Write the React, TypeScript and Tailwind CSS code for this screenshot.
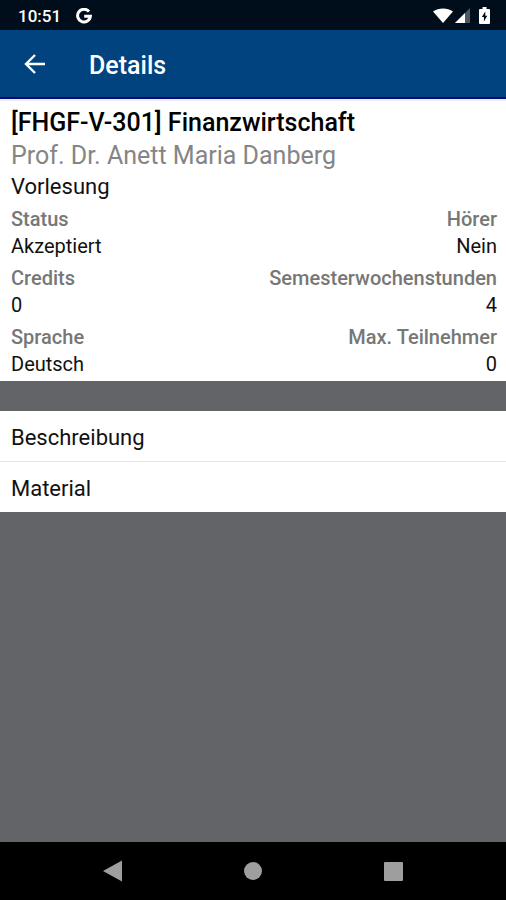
type Fact = { label: string; value: string };

const facts: [Fact, Fact][] = [
  [{ label: "Status", value: "Akzeptiert" }, { label: "Hörer", value: "Nein" }],
  [{ label: "Credits", value: "0" }, { label: "Semesterwochenstunden", value: "4" }],
  [{ label: "Sprache", value: "Deutsch" }, { label: "Max. Teilnehmer", value: "0" }],
];

const sections = ["Beschreibung", "Material"];

function StatusBar() {
  return (
    <div className="flex h-[30px] items-center justify-between bg-[#000d1a] pt-px pr-4 pl-[18px] text-white">
      <div className="flex items-center gap-[15px]">
        <span className="text-[17px] leading-7 font-medium">10:51</span>
        <svg viewBox="0 0 16 16" className="size-4" fill="none" stroke="currentColor" strokeWidth="3" aria-label="Google">
          <path d="M13 3.6A6.4 6.4 0 1 0 14.4 8.2H8.2" />
        </svg>
      </div>
      <div className="flex items-center gap-[2px]">
        <svg viewBox="0 0 20 15" className="h-[15px] w-5" fill="currentColor" aria-label="WLAN">
          <path d="M0 3.4C5.600-.6 14.400-.6 20 3.400L10 15z" />
        </svg>
        <svg viewBox="0 0 15 15" className="mr-[7px] h-[15px] w-[15px]" fill="currentColor" aria-label="Mobilfunk">
          <path d="M15 0v15H0z" fill="#4d5763" />
          <path d="M10 5v10H0z" />
        </svg>
        <svg viewBox="0 0 11 17" className="h-[17px] w-[11px]" aria-label="Akku">
          <path d="M3.500 0h4v2H10q1 0 1 1v13q0 1-1 1H1q-1 0-1-1V3q0-1 1-1h2.500z" fill="currentColor" />
          <path d="M6.300 4.500 2.800 10h2.100v4.500L8.300 8.700H6.300z" fill="#000d1a" />
        </svg>
      </div>
    </div>
  );
}

function Header() {
  return (
    <header className="flex h-[69px] items-center border-b-2 border-[#00097a] bg-[#00437f] pt-px pl-6 text-white">
      <button type="button" aria-label="Zurück" className="mr-11 flex size-[21px] items-center justify-center">
        <svg viewBox="0 0 21 20" className="h-5 w-[21px]" fill="none" stroke="currentColor" strokeWidth="2.400">
          <path d="M21 10H2.500M11 1 2 10l9 9" />
        </svg>
      </button>
      <h1 className="pt-1 text-[25px] leading-8 font-medium">Details</h1>
    </header>
  );
}

function FactCell({ label, value }: Fact) {
  return (
    <div>
      <dt className="text-[20px] leading-[27px] font-medium text-[#777]">{label}</dt>
      <dd className="text-[20px] leading-[26px]">{value}</dd>
    </div>
  );
}

function NavBar() {
  return (
    <nav className="flex h-[58px] items-center justify-center gap-[120px] bg-black text-[#9e9e9e]">
      <button type="button" aria-label="Zurück" className="flex size-5 items-center justify-center">
        <svg viewBox="0 0 20 22" className="h-[22px] w-5" fill="currentColor">
          <path d="M19 .5v21L0 11z" />
        </svg>
      </button>
      <button type="button" aria-label="Startseite" className="flex size-5 items-center justify-center">
        <span className="size-[18px] rounded-full bg-current" />
      </button>
      <button type="button" aria-label="Übersicht" className="flex size-5 items-center justify-center">
        <span className="size-[19px] rounded-[1px] bg-current" />
      </button>
    </nav>
  );
}

export default function App() {
  return (
    <div className="flex min-h-screen flex-col bg-[#636467] font-[Roboto,sans-serif] text-[#111]">
      <StatusBar />
      <Header />
      <main className="flex-1">
        <section className="border-t-2 border-[#ededf3] bg-white pt-[5px] pr-[9px] pb-1 pl-[11px]">
          <h2 className="text-[25px] leading-[33px] font-medium text-black">[FHGF-V-301] Finanzwirtschaft</h2>
          <p className="text-[25px] leading-[33px] text-[#858585]">Prof. Dr. Anett Maria Danberg</p>
          <p className="text-[22px] leading-[30px]">Vorlesung</p>
          <dl className="flex flex-col gap-[6px] pt-1">
            {facts.map(([left, right]) => (
              <div key={left.label} className="flex justify-between">
                <FactCell {...left} />
                <div className="text-right">
                  <FactCell {...right} />
                </div>
              </div>
            ))}
          </dl>
        </section>
        <ul className="mt-[30px] divide-y divide-[#e4e4e4] bg-white">
          {sections.map((name) => (
            <li key={name}>
              <button type="button" className="block h-[50px] w-full px-[11px] pt-[2px] text-left text-[22px]">
                {name}
              </button>
            </li>
          ))}
        </ul>
      </main>
      <NavBar />
    </div>
  );
}
